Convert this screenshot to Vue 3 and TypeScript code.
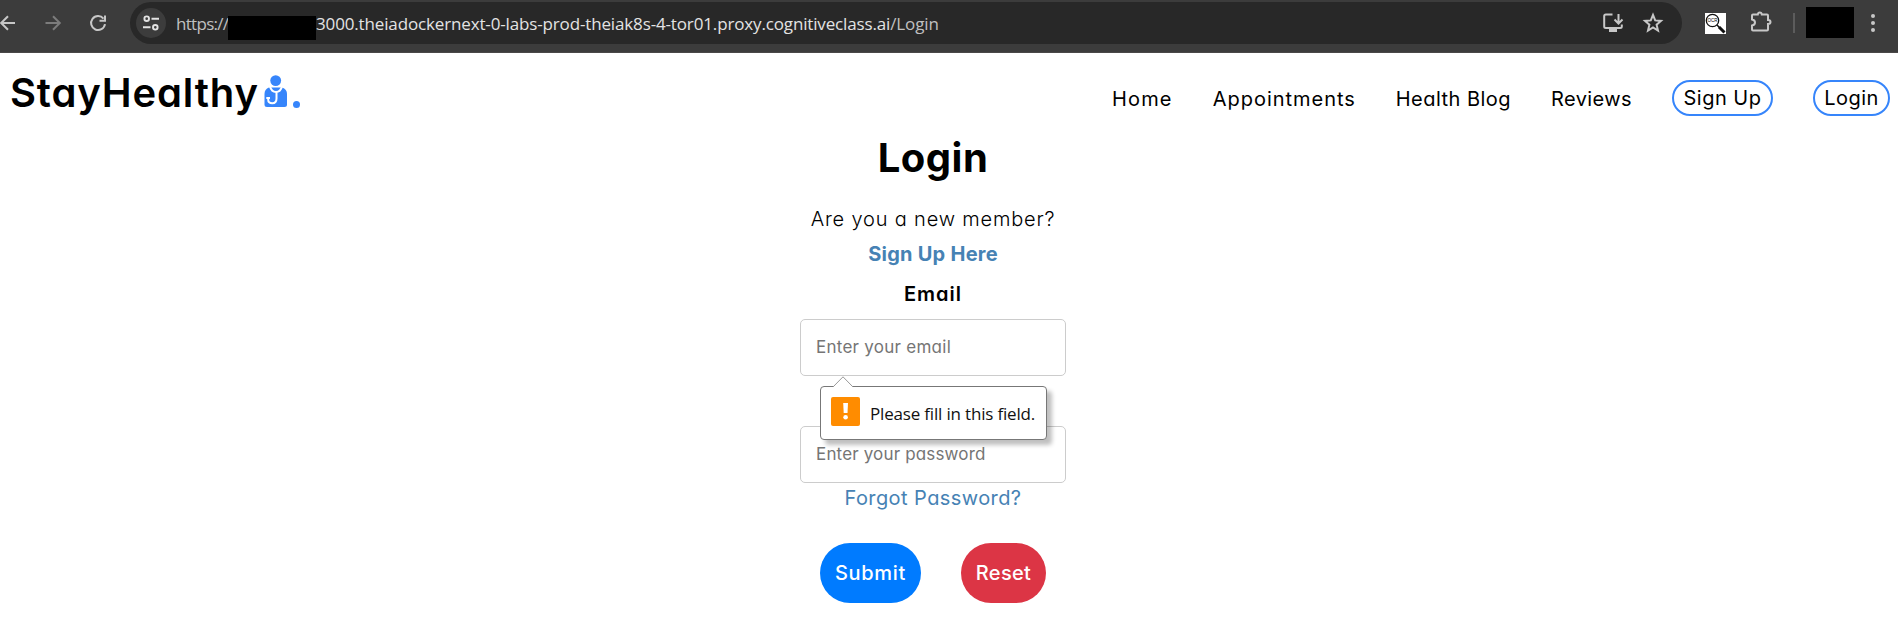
<script setup lang="ts">
interface NavItem { label: string; cls: string; pill: boolean }
const nav: NavItem[] = [
  { label: 'Home', cls: 'home', pill: false },
  { label: 'Appointments', cls: 'appointments', pill: false },
  { label: 'Health Blog', cls: 'blog', pill: false },
  { label: 'Reviews', cls: 'reviews', pill: false },
  { label: 'Sign Up', cls: 'signup', pill: true },
  { label: 'Login', cls: 'login', pill: true },
]
</script>

<template>
  <div class="page">
    <header class="browser">
      <div class="controls">
        <svg class="ic back" width="20" height="20" viewBox="0 0 20 20"><path d="M17 10H3.500M10 3.200 3.200 10l6.800 6.800" /></svg>
        <svg class="ic fwd" width="20" height="20" viewBox="0 0 20 20"><path d="M2.500 10H16.500M10 3.200 16.800 10l-6.800 6.800" /></svg>
        <svg class="ic reload" width="20" height="20" viewBox="0 0 20 20"><path d="M15.500 5.600A7 7 0 1 0 17 11.200M17 2.500V7.700H11.500" /></svg>
      </div>
      <div class="omnibox">
        <span class="site">
          <svg width="18" height="18" viewBox="0 0 18 18"><circle cx="4.700" cy="4.700" r="2.300" /><path d="M9.500 4.700H17M1 13.300H8.500" /><circle cx="13.300" cy="13.300" r="2.300" /></svg>
        </span>
        <span class="url scheme">https://</span>
        <span class="redacted"></span>
        <span class="url host">3000.theiadockernext-0-labs-prod-theiak8s-4-tor01.proxy.cognitiveclass.ai<i>/Login</i></span>
        <svg class="ic install" width="22" height="22" viewBox="0 0 22 22"><path d="M10.500 2.500H3.800Q2.200 2.500 2.200 4V14.500Q2.200 16 3.800 16H18.200Q19.800 16 19.800 14.500V12.500M16.500 2V10.500M12.500 7.500 16.500 11.500 20.500 7.500" /><path class="solid" d="M8 17H14V19H8Z" /></svg>
        <svg class="ic star" width="22" height="22" viewBox="0 0 22 22"><path d="M11 2.900 13.200 8.400 19 8.900 14.600 12.700 16 18.500 11 15.400 6 18.500 7.400 12.700 3 8.900 8.800 8.400Z" /></svg>
      </div>
      <svg class="ocr" width="21" height="21" viewBox="0 0 21 21"><rect width="21" height="21" fill="#fff" /><circle cx="7.500" cy="7.500" r="6.200" fill="#fff" stroke="#111" stroke-width="1.300" /><path d="M12 12 14.500 14.500" stroke="#111" stroke-width="1.500" /><path d="M14 14 19.500 19.500" stroke="#111" stroke-width="3" /><text x="7.500" y="9.200" font-size="4.500" font-weight="400" text-anchor="middle" font-family="Liberation Sans">OCR</text></svg>
      <svg class="ic puzzle" width="22" height="22" viewBox="0 0 22 22"><path d="M2 4.500Q2 3.500 3 3.500H7.800Q8 1.500 9.800 1.500T11.800 3.500H17Q18 3.500 18 4.500V9Q20.500 9 20.500 11T18 13V18.500Q18 19.500 17 19.500H3Q2 19.500 2 18.500V14.500Q5 14 5 11.500T2 8.500Z" /></svg>
      <span class="divider"></span>
      <span class="profile"></span>
      <span class="menu"><b></b><b></b><b></b></span>
    </header>

    <nav class="navbar">
      <a class="brand">
        <span class="name">StayHealthy</span>
        <svg class="doctor" width="24" height="33" viewBox="0 0 24 33"><circle cx="11.700" cy="5.600" r="5.400" /><path d="M5 12.500H18Q23 14 23 19V29.500Q23 32 20.500 32H3Q.5 32 .5 29.500V19Q.5 14 5 12.500Z" /><path class="scope" d="M6 11.500Q7.500 17 12 17T18 11.500M12.500 17V23.500Q12.500 28.300 8.300 28.300T4.200 24.500V23.200M2.300 23H6" /></svg>
        <i class="dot"></i>
      </a>
      <ul class="links">
        <li v-for="n in nav" :key="n.cls" :class="[n.cls, { pill: n.pill }]">{{ n.label }}</li>
      </ul>
    </nav>

    <main class="form">
      <h1>Login</h1>
      <p class="ask">Are you a new member?</p>
      <a class="signhere">Sign Up Here</a>
      <label class="email">Email</label>
      <div class="field first">
        <span class="em">Enter your email</span>
        <div class="tip">
          <svg class="arrow" width="22" height="12" viewBox="0 0 22 12"><path d="M1 11 11 .8 21 11V12H1Z" fill="#fff" /><path d="M1 11 11 .8 21 11" fill="none" stroke="#999" /></svg>
          <span class="warn"><svg width="29" height="29" viewBox="0 0 29 29"><path d="M12.200 6H17L16.500 16H12.700Z" /><circle cx="14.600" cy="20.300" r="2.300" /></svg></span>
          <span class="msg">Please fill in this field.</span>
        </div>
      </div>
      <div class="field second"><span class="pw">Enter your password</span></div>
      <a class="forgot">Forgot Password?</a>
      <div class="buttons">
        <button class="submit">Submit</button>
        <button class="reset">Reset</button>
      </div>
    </main>
  </div>
</template>

<style>
body { margin: 0; background: #fff; }
</style>
<style scoped>
* { box-sizing: border-box; }
.page { width: 1898px; height: 642px; overflow: hidden; background: #fff; color: #000; font-family: Inter, "Liberation Sans", sans-serif; font-feature-settings: "cv11", "ss03"; font-size: 20px; }
.browser { height: 53px; background: #3c3c3c; border-bottom: 1px solid #4a4848; display: flex; align-items: flex-start; }
.ic { fill: none; stroke: #c7c7c7; stroke-width: 2; flex: none; }
.controls { width: 130px; height: 45px; display: flex; align-items: center; flex: none; }
.back { margin-left: -2px; }
.fwd { margin-left: 25px; stroke: #7c7c7c; }
.reload { margin-left: 25px; }
.omnibox { width: 1552px; height: 42px; margin-top: 2px; border-radius: 21px; background: #282828; display: flex; align-items: center; flex: none; }
.site { width: 30px; height: 30px; margin-left: 6px; border-radius: 50%; background: #3c3c3c; display: flex; align-items: center; justify-content: center; }
.site svg { fill: none; stroke: #e3e3e3; stroke-width: 1.900; }
.url { font: 17px/24px "Open Sans", sans-serif; color: #e3e3e3; white-space: nowrap; margin-top: 2px; }
.url i { font-style: normal; color: #c0c0c0; }
.scheme { margin-left: 10px; width: 52px; color: #c0c0c0; letter-spacing: -.700px; }
.redacted { width: 88px; height: 24px; background: #000; margin-top: 9px; }
.host { flex: 1; letter-spacing: -.145px; }
.install { margin-right: 18px; }
.star { margin-right: 18px; }
.ocr { margin: 13px 0 0 23px; flex: none; }
.puzzle { margin: 11px 0 0 24px; flex: none; }
.divider { width: 2px; height: 20px; margin: 13px 0 0 21px; background: #5c5c5c; }
.profile { width: 48px; height: 31px; margin: 7px 0 0 11px; background: #000; }
.menu { display: flex; flex-direction: column; gap: 3px; margin: 14px 0 0 17px; }
.menu b { width: 4px; height: 4px; border-radius: 50%; background: #c7c7c7; }
.navbar { height: 87px; display: flex; justify-content: space-between; }
.brand { display: flex; margin: 15px 0 0 10px; font-size: 40px; font-weight: 600; line-height: 50px; height: 50px; letter-spacing: .850px; }
.name { width: 248px; white-space: nowrap; }
.doctor { margin: 7px 0 0 6px; fill: #3685fb; }
.scope { fill: none; stroke: #fff; stroke-width: 2; }
.dot { width: 7px; height: 7px; border-radius: 50%; background: #3685fb; margin: 33px 0 0 5px; }
.links { list-style: none; margin: 27px 8px 0 0; padding: 0; display: flex; height: 36px; line-height: 38px; }
.links li { white-space: nowrap; margin-left: 40px; }
.home { letter-spacing: 1.200px; }
.appointments { letter-spacing: .970px; }
.blog { letter-spacing: .470px; }
.reviews { letter-spacing: .400px; }
.pill { border: 2px solid #3685fb; border-radius: 18px; text-align: center; line-height: 32px; letter-spacing: .500px; }
.pill.signup { width: 101px; }
.pill.login { width: 77px; }
.form { width: 266px; margin-left: 800px; display: flex; flex-direction: column; align-items: center; white-space: nowrap; }
h1 { margin: -2px 0 0; font-size: 40px; font-weight: 700; line-height: 40px; letter-spacing: .500px; }
.ask { margin: 21px 0 0; font-weight: 300; line-height: 40px; letter-spacing: .820px; }
.signhere, .forgot { color: #4682b4; }
.signhere { font-weight: 700; line-height: 30px; letter-spacing: .250px; }
.email { font-weight: 600; line-height: 30px; margin-top: 10px; letter-spacing: 1px; }
.field { width: 266px; height: 57px; border: 1px solid #ccc; border-radius: 5px; padding-left: 15px; line-height: 54px; font-size: 17px; color: #757575; }
.em { letter-spacing: .260px; }
.pw { letter-spacing: .160px; }
.first { margin-top: 10px; position: relative; }
.second { margin-top: 50px; }
.tip { position: absolute; z-index: 2; left: 19px; top: 66px; width: 227px; height: 54px; border: 1px solid #777; border-radius: 4px; background: #fff; box-shadow: 5px 5px 4px rgba(0,0,0,.25); display: flex; color: #111; }
.arrow { position: absolute; left: 11px; top: -11px; }
.warn { width: 29px; height: 29px; margin: 10px 0 0 10px; background: #ff8c00; border-radius: 2px; }
.warn svg { display: block; fill: #fff; }
.msg { font: 17px/53px "Open Sans", sans-serif; margin-left: 10px; letter-spacing: -.180px; }
.forgot { line-height: 30px; letter-spacing: .420px; }
.buttons { display: flex; gap: 40px; margin-top: 30px; }
button { height: 60px; border: 0; border-radius: 30px; padding: 0; color: #fff; font: 500 20px/60px Inter, sans-serif; font-feature-settings: inherit; }
.submit { width: 101px; background: #007bff; letter-spacing: .700px; }
.reset { width: 85px; background: #dc3545; letter-spacing: .300px; }
</style>
